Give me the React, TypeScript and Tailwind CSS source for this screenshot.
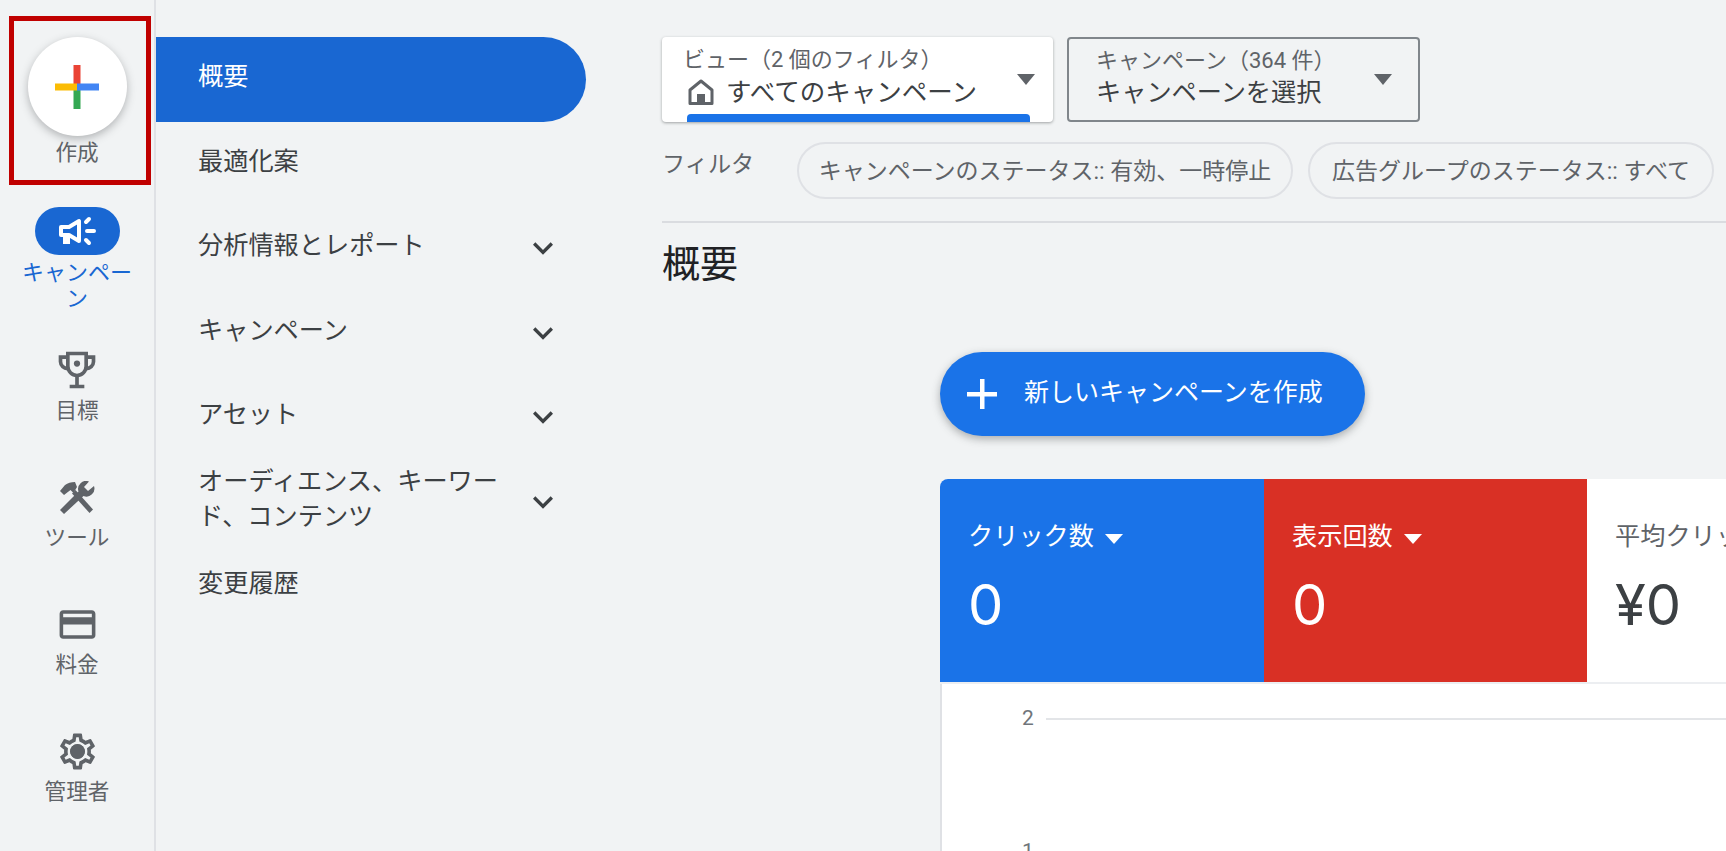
import { MdCreditCard, MdExpandMore, MdOutlineSettings } from "react-icons/md";
import type { ReactNode } from "react";

const FONT = "font-['Roboto','Noto_Sans_CJK_JP',sans-serif]";

function Trophy() {
  return (
    <svg viewBox="0 0 24 24" className="size-[44px]" fill="none" stroke="currentColor" strokeWidth="2">
      <path d="M7 3h10v7a5 5 0 0 1-10 0z" />
      <path d="M7 5H3v2.5A3.8 3.8 0 0 0 7 11.2M17 5h4v2.5a3.8 3.8 0 0 1-4 3.7M12 15v5M8 21h8" />
      <circle cx="12" cy="8.5" r="1.7" fill="currentColor" stroke="none" />
    </svg>
  );
}

function Megaphone() {
  return (
    <svg viewBox="0 0 38 30" className="w-[38px] h-[30px]" fill="none" stroke="currentColor" strokeWidth="4">
      <path d="M3 11h8l10-6v20l-10-6H3z" strokeLinejoin="round" />
      <path d="M7 19v7h3v-7" />
      <path d="M28 6l3-3M29 15h7M28 24l3 3" strokeLinecap="round" />
    </svg>
  );
}

function Tools() {
  return (
    <svg viewBox="0 0 36 33" className="w-[36px] h-[33px]" fill="currentColor">
      <path d="M1 10L6 4Q10 1 16 1L18 6L14.500 12L11.500 9L5 14Z" />
      <path d="M13 12.500L16.500 9L34 28.500L30.500 32Z" />
      <path d="M30 .5L25 6L29 10L35 5A8 8 0 0 1 24.500 15L5 33L1 29L19.500 10.500A8 8 0 0 1 30 .5Z" />
    </svg>
  );
}

function HomeIcon() {
  return (
    <svg viewBox="0 0 26 26" className="size-[26px] shrink-0 text-[#5f6368]" fill="none" stroke="currentColor" strokeWidth="3">
      <path d="M2 24.500V11L13 2l11 9v13.500z" strokeLinejoin="round" />
      <rect x="9" y="15" width="8" height="9.500" fill="currentColor" stroke="none" />
    </svg>
  );
}

function RailItem({ icon, label }: { icon: ReactNode; label: string }) {
  return (
    <div className="h-[127px] flex flex-col items-center text-[#5f6368]">
      <div className="h-[42px] flex items-center justify-center">{icon}</div>
      <p className="mt-[7px] text-[21.600px] leading-[26px]">{label}</p>
    </div>
  );
}

function Rail() {
  return (
    <aside className="w-[156px] shrink-0 border-r-2 border-[#dfe1e5] pt-[37px]">
      <div className="h-[170px] flex flex-col items-center">
        <div className="size-[99px] rounded-full bg-white shadow-[0_3px_8px_rgba(60,64,67,0.35)] flex items-center justify-center">
          <svg viewBox="0 0 44 44" className="size-[44px]">
            <rect x="18.500" y="0" width="7" height="22" fill="#ea4335" />
            <rect x="18.500" y="22" width="7" height="22" fill="#34a853" />
            <rect x="0" y="18.500" width="22" height="7" fill="#fbbc04" />
            <rect x="22" y="18.500" width="22" height="7" fill="#4285f4" />
          </svg>
        </div>
        <p className="mt-[4px] text-[21.600px] leading-[26px] text-[#5f6368]">作成</p>
      </div>
      <div className="h-[142px] flex flex-col items-center">
        <div className="w-[85px] h-[48px] rounded-full bg-[#1967d2] text-white flex items-center justify-center">
          <Megaphone />
        </div>
        <p className="mt-[5px] w-[116px] text-center text-[22px] leading-[26px] text-[#1967d2]">キャンペーン</p>
      </div>
      <RailItem icon={<Trophy />} label="目標" />
      <RailItem icon={<Tools />} label="ツール" />
      <RailItem icon={<MdCreditCard className="size-[43px]" />} label="料金" />
      <RailItem
        icon={
          <span className="relative size-[43px]">
            <MdOutlineSettings className="size-[43px]" />
            <span className="absolute left-[14px] top-[14px] size-[15px] rounded-full bg-[#5f6368]" />
          </span>
        }
        label="管理者"
      />
    </aside>
  );
}

function NavRow({ label, chevron = true }: { label: string; chevron?: boolean }) {
  return (
    <div className="h-[84.500px] flex items-center justify-between pl-[42px] pr-[23px] pb-[6px] text-[#3c4043]">
      <p className="w-[312px] text-[25.200px] leading-[35px]">{label}</p>
      {chevron && <MdExpandMore className="size-[40px] mt-[5px] shrink-0 text-[#3c4043]" />}
    </div>
  );
}

function Nav() {
  return (
    <nav className="w-[430px] shrink-0 pt-[37px]">
      <div className="h-[85px] rounded-r-full bg-[#1967d2] text-white flex items-center pl-[42px] pb-[7px]">
        <p className="text-[25.200px] leading-[35px]">概要</p>
      </div>
      <NavRow label="最適化案" chevron={false} />
      <NavRow label="分析情報とレポート" />
      <NavRow label="キャンペーン" />
      <NavRow label="アセット" />
      <NavRow label="オーディエンス、キーワード、コンテンツ" />
      <NavRow label="変更履歴" chevron={false} />
    </nav>
  );
}

function Caret() {
  return <span className="block border-x-[9px] border-t-[11px] border-x-transparent border-t-[#5f6368]" />;
}

function Tile({ label, value, color }: { label: string; value: string; color: string }) {
  return (
    <div className={`h-[203px] pl-[28px] pt-[40px] ${color}`}>
      <div className="flex items-center gap-[11px] text-[25.200px] leading-[36px]">
        <p>{label}</p>
        <span className="mt-1 border-x-[9px] border-t-[10px] border-x-transparent border-t-white" />
      </div>
      <p className="mt-[17px] font-['Inter',sans-serif] text-[56px] leading-[66px]">{value}</p>
    </div>
  );
}

export default function App() {
  return (
    <div className={`relative h-[851px] w-full overflow-hidden flex bg-[#f1f3f4] ${FONT}`}>
      <Rail />
      <Nav />
      <main className="flex-1 min-w-0 pl-[76px] pt-[37px]">
        <div className="flex gap-[14px]">
          <div className="relative w-[391px] h-[85px] rounded bg-white shadow-[0_1px_3px_rgba(60,64,67,0.45)] pl-[21px] pr-[18px] flex items-center justify-between">
            <div className="-mt-[6px]">
              <p className="text-[22px] leading-[30px] text-[#5f6368]">ビュー（2 個のフィルタ）</p>
              <div className="mt-px pl-[5px] flex items-center gap-[12px] text-[25.500px] leading-[32px] text-[#3c4043]">
                <HomeIcon />
                <p>すべてのキャンペーン</p>
              </div>
            </div>
            <Caret />
            <span className="absolute left-[25px] right-[23px] bottom-0 h-[8px] rounded-t bg-[#1a73e8]" />
          </div>
          <div className="w-[353px] h-[85px] rounded border-2 border-[#80868b] pl-[27px] pr-[26px] flex items-center justify-between">
            <div className="-mt-[4px]">
              <p className="text-[22px] leading-[30px] text-[#5f6368]">キャンペーン（364 件）</p>
              <p className="mt-px text-[25.200px] leading-[32px] text-[#3c4043]">キャンペーンを選択</p>
            </div>
            <Caret />
          </div>
        </div>

        <div className="mt-[20px] h-[56px] flex gap-[15px] text-[#5f6368]">
          <p className="w-[120px] text-[23.200px] leading-[44px]">フィルタ</p>
          <p className="w-[496px] h-[57px] rounded-full border-2 border-[#dfe1e5] text-center text-[23px] leading-[55px]">キャンペーンのステータス:: 有効、一時停止</p>
          <p className="w-[406px] h-[57px] rounded-full border-2 border-[#dfe1e5] text-center text-[23px] leading-[55px]">広告グループのステータス:: すべて</p>
        </div>

        <div className="mt-[23px] h-[2px] bg-[#dadce0]" />
        <h1 className="mt-[18px] text-[38px] leading-[46px] text-[#202124]">概要</h1>

        <button className="mt-[65px] ml-[278px] w-[425px] h-[84px] rounded-full bg-[#1a73e8] text-white shadow-[0_3px_8px_rgba(60,64,67,0.4)] flex items-center pl-[26px]">
          <svg viewBox="0 0 32 32" className="size-[32px]" fill="currentColor">
            <rect x="14" y="1" width="4.500" height="30" />
            <rect x="1" y="14" width="30" height="4.500" />
          </svg>
          <span className="ml-[26px] -mt-[3px] text-[25px]">新しいキャンペーンを作成</span>
        </button>

        <section className="mt-[43px] ml-[278px] bg-white rounded-tl-lg overflow-hidden h-[400px]">
          <div className="flex border-b-2 border-[#eceef1]">
            <div className="w-[324px]"><Tile label="クリック数" value="0" color="bg-[#1a73e8] text-white" /></div>
            <div className="w-[323px]"><Tile label="表示回数" value="0" color="bg-[#d93025] text-white" /></div>
            <div className="flex-1 min-w-0 h-[203px] pl-[28px] pt-[40px] text-[#3c4043] overflow-hidden">
              <p className="text-[25.200px] leading-[36px] text-[#5f6368] whitespace-nowrap">平均クリック単価</p>
              <p className="mt-[17px] font-['Inter',sans-serif] text-[56px] leading-[66px]">¥0</p>
            </div>
          </div>
          <div className="border-l-2 border-[#dfe1e5] h-full pl-[80px] pt-[20px] text-[#70757a] text-[21px]">
            <div className="flex items-center gap-[12px] h-[30px]">
              <span>2</span>
              <span className="flex-1 h-[2px] bg-[#e3e5e8]" />
            </div>
            <div className="mt-[103px] flex items-center gap-[12px] h-[30px]">
              <span>1</span>
              <span className="flex-1 h-[2px] bg-[#e3e5e8]" />
            </div>
          </div>
        </section>
      </main>
      {/* annotation box from the screenshot */}
      <div className="absolute left-[9px] top-[16px] w-[142px] h-[169px] border-[5px] border-[#c00000]" />
    </div>
  );
}
